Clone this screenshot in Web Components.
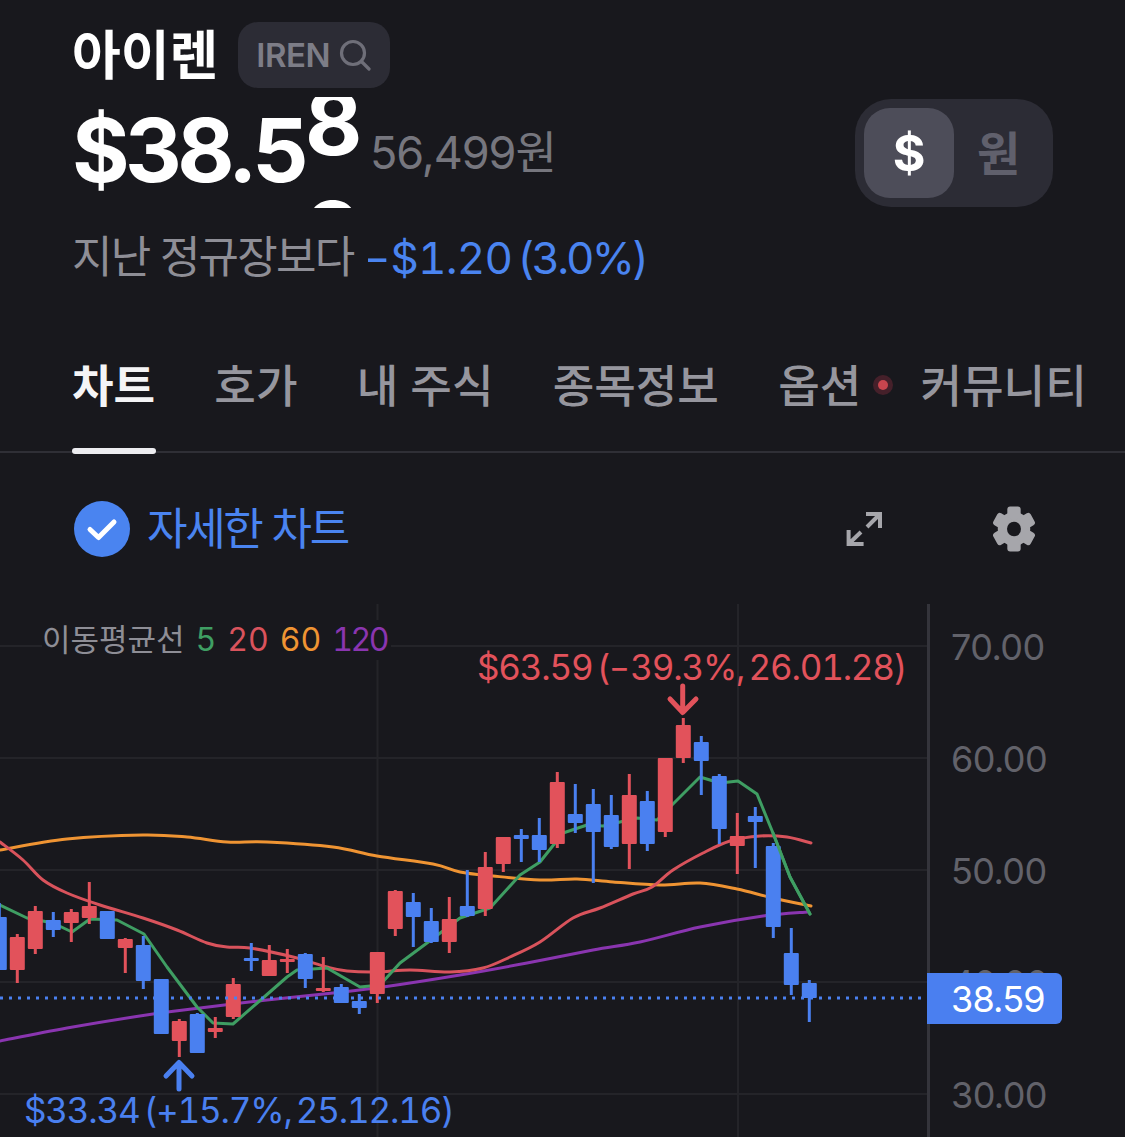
<!doctype html>
<html lang="ko">
<head>
<meta charset="utf-8">
<title>아이렌</title>
<style>
  html, body { margin: 0; background: #18181d; }
  body {
    width: 1125px; height: 1137px; overflow: hidden;
    font-family: Inter, "Noto Sans CJK KR", sans-serif;
    color: #fff;
  }
</style>
</head>
<body>
<stock-header name="아이렌" ticker="IREN" price="$38.5" krw="56,499원" label="지난 정규장보다" amount="$1.20" percent="(3.0%)"></stock-header>
<stock-tabs>
  <stock-tab active>차트</stock-tab>
  <stock-tab>호가</stock-tab>
  <stock-tab>내 주식</stock-tab>
  <stock-tab>종목정보</stock-tab>
  <stock-tab dot>옵션</stock-tab>
  <stock-tab>커뮤니티</stock-tab>
</stock-tabs>
<chart-toolbar>자세한 차트</chart-toolbar>
<candle-chart></candle-chart>

<script>
// unit-toggle: $ / 원 pill on the price row
class UnitToggle extends HTMLElement {
  constructor() {
    super();
    this.attachShadow({ mode: "open" }).innerHTML = `
      <style>
        :host { display: flex; width: 198px; height: 108px; box-sizing: border-box; padding: 9px; background: #2c2c35; border-radius: 36px; margin-top: 2px; }
        span { display: flex; align-items: center; justify-content: center; width: 90px; height: 90px; border-radius: 26px; font-weight: 700; color: #60606c; }
        .on { background: #4d4d59; color: #fff; font-size: 50px; }
        .off { width: 89px; font-size: 47px; padding-bottom: 6px; box-sizing: border-box; }
      </style>
      <span class="on">$</span><span class="off">원</span>`;
  }
}
customElements.define("unit-toggle", UnitToggle);

class StockHeader extends HTMLElement {
  constructor() {
    super();
    this.attachShadow({ mode: "open" });
  }
  connectedCallback() {
    const a = (n) => this.getAttribute(n) || "";
    this.shadowRoot.innerHTML = `
      <style>
        :host { display: block; box-sizing: border-box; height: 345px; padding: 22px 72px 0; }
        .name { display: flex; align-items: center; gap: 20px; height: 66px; }
        h1 { margin: 2px 0 0; font-size: 53px; font-weight: 700; line-height: 66px; }
        .chip { display: flex; align-items: center; gap: 9px; box-sizing: border-box; width: 152px; height: 66px; padding-left: 18px; border-radius: 20px; background: #2c2c35; color: #7d7d87; font-size: 33px; font-weight: 600; letter-spacing: -0.5px; }
        .chip svg { display: block; }
        .row { display: flex; justify-content: space-between; height: 111px; margin-top: 9px; }
        .price { display: flex; align-items: flex-start; }
        .big { font-size: 88px; font-weight: 700; line-height: 110px; letter-spacing: -4.6px; margin-top: -2px; }
        .roller { width: 54px; height: 111px; margin-left: 1px; overflow: hidden; font-size: 88px; font-weight: 700; line-height: 110px; }
        .roller div { transform: translateY(-29px); }
        .krw { margin: 29px 0 0 11px; font-size: 45px; line-height: 54px; color: #76767e; letter-spacing: -1px; }
        .change { display: flex; margin-top: 19px; font-size: 44px; line-height: 62px; color: #8e8e96; white-space: nowrap; }
        .label { letter-spacing: -1.8px; margin: -1px 11px 0 0; }
        .delta { display: flex; color: #4a84f0; }
        .minus { transform-origin: left; transform: scaleX(1.3); margin-right: 6px; }
        .amount { font-feature-settings: "tnum"; letter-spacing: -0.8px; margin-right: 5px; }
        .percent { font-feature-settings: "tnum"; letter-spacing: -2.9px; }
      </style>
      <div class="name">
        <h1>${a("name")}</h1>
        <div class="chip">${a("ticker")}
          <svg width="32" height="32" viewBox="0 0 32 32" fill="none" stroke="#6f6f79" stroke-width="3.2" stroke-linecap="round"><circle cx="14" cy="14" r="11.5"/><path d="M23 23l7 7"/></svg>
        </div>
      </div>
      <div class="row">
        <div class="price">
          <span class="big">${a("price")}</span>
          <div class="roller"><div>8<br>9</div></div>
          <span class="krw">${a("krw")}</span>
        </div>
        <unit-toggle></unit-toggle>
      </div>
      <div class="change"><span class="label">${a("label")}</span><div class="delta"><span class="minus">-</span><span class="amount">${a("amount")}</span><span class="percent">${a("percent")}</span></div></div>`;
  }
}
customElements.define("stock-header", StockHeader);

class StockTabs extends HTMLElement {
  constructor() {
    super();
    this.attachShadow({ mode: "open" }).innerHTML = `
      <style>
        :host { display: flex; gap: 59.2px; box-sizing: border-box; height: 108px; padding-left: 72px; border-bottom: 2px solid #2f2f36; white-space: nowrap; }
      </style>
      <slot></slot>`;
  }
}
customElements.define("stock-tabs", StockTabs);

class StockTab extends HTMLElement {
  constructor() {
    super();
    this.attachShadow({ mode: "open" }).innerHTML = `
      <style>
        :host { display: block; position: relative; font-size: 45.2px; font-weight: 500; line-height: 84px; color: #96969e; }
        :host([active]) { font-weight: 700; color: #f4f4f6; }
        :host([active])::after { content: ""; position: absolute; left: 0; right: -1px; top: 103px; height: 6px; border-radius: 3px; background: #ececf0; }
        :host([dot])::before { content: ""; position: absolute; right: -27px; top: 35px; width: 10px; height: 10px; border-radius: 50%; background: #c8454e; box-shadow: 0 0 0 5px #45202a; }
      </style>
      <slot></slot>`;
  }
}
customElements.define("stock-tab", StockTab);

class ChartToolbar extends HTMLElement {
  constructor() {
    super();
    this.attachShadow({ mode: "open" }).innerHTML = `
      <style>
        :host { display: flex; align-items: center; box-sizing: border-box; height: 151px; padding: 0 0 0 74px; }
        .toolbar-check { display: block; margin-right: 17px; }
        .label { font-size: 44px; line-height: 60px; color: #4a84f0; letter-spacing: -2.3px; flex: 1; }
        svg.expand { display: block; margin-right: 110px; }
        svg.gear { display: block; margin-right: 90px; }
      </style>
      <svg class="toolbar-check" width="56" height="56" viewBox="0 0 56 56"><circle cx="28" cy="28" r="28" fill="#4a84f0"/><path d="M16 28.5l8.5 8L40 21" fill="none" stroke="#fff" stroke-width="5" stroke-linecap="round" stroke-linejoin="round"/></svg>
      <span class="label"><slot></slot></span>
      <svg class="expand" width="38" height="38" viewBox="0 0 38 38" fill="none" stroke="#a6a6ab" stroke-width="4"><path d="M21 4h14v14M35 4L22 17M3.6 20v14h15M3.6 34L16 22"/></svg>
      <svg class="gear" width="42" height="46" viewBox="-22 -23 44 46" preserveAspectRatio="none">
        <g fill="#a6a6ab">
          <circle r="17"/>
          <rect x="-7" y="-22.5" width="14" height="45" rx="3"/>
          <rect x="-7" y="-22.5" width="14" height="45" rx="3" transform="rotate(60)"/>
          <rect x="-7" y="-22.5" width="14" height="45" rx="3" transform="rotate(120)"/>
        </g>
        <circle r="7.3" fill="#18181d"/>
      </svg>`;
  }
}
customElements.define("chart-toolbar", ChartToolbar);

// candle-chart: all numbers are y pixels in page coords (svg viewBox starts at 604)
// [color, wickTop, bodyTop, bodyBottom, wickBottom]; candle i sits at x = -0.7 + 18 * i
const CANDLES = [
  ["b",903,917,970,970],["r",934,937,970,983],["r",906,911,949,954],["b",912,920,930,937],
  ["r",909,912,923,942],["r",882,906,918,924],["b",911,911,939,939],["r",938,939,948,973],
  ["b",936,945,981,989],["b",979,979,1034,1034],["r",1019,1021,1041,1057],["b",1013,1014,1053,1053],
  ["r",1017,1028,1032,1038],["r",978,984,1017,1019],["b",943,958,961,971],["r",945,960,976,976],
  ["r",949,959,962,973],["b",953,954,979,988],["r",957,988,991,992],["b",984,987,1003,1003],
  ["b",994,1001,1008,1014],["r",952,952,994,1003],["r",890,891,929,936],["b",893,902,917,947],
  ["b",908,921,942,943],["r",897,919,942,953],["b",870,906,916,917],["r",852,867,909,916],
  ["r",837,837,864,872],["b",829,835,839,862],["b",818,835,850,862],["r",772,782,844,848],
  ["b",784,814,823,833],["b",789,804,832,883],["b",795,815,847,849],["r",774,795,844,869],
  ["b",791,801,844,851],["r",758,758,832,837],["r",718,725,758,763],["b",736,742,761,795],
  ["b",774,776,829,844],["r",813,836,846,874],["b",807,816,822,868],["b",843,846,927,938],
  ["b",928,953,985,995],["b",980,983,998,1022],
];
const GREEN = "#3f9e63", ROSE = "#d9535c", ORANGE = "#ef9433", PURPLE = "#8a35b0";
const MA = [
  [PURPLE, [[0,1041],[67,1028],[153,1014],[200,1008],[267,1000],[333,993],[383,987],[460,975],[527,963],[593,950],[640,942],[700,927],[763,916],[808,912]]],
  [ORANGE, [[0,850],[67,839],[143,835],[187,837],[227,842],[267,842],[333,847],[377,856],[433,864],[460,872],[493,876],[540,880],[577,879],[613,882],[660,885],[700,883],[737,889],[773,898],[811,906]]],
  [ROSE, [[0,842],[23,860],[43,880],[67,893],[100,905],[143,918],[177,930],[207,943],[227,947],[250,948],[293,957],[327,967],[347,971],[377,972],[410,970],[450,972],[483,968],[510,957],[540,942],[573,918],[600,908],[633,894],[652,887],[673,870],[703,853],[730,841],[760,836],[787,837],[811,843]]],
];
// the 5 line has visible corners in the reference, so it stays a polyline
const MA5 = [[0,905],[27,918],[53,923],[72,932],[90,919],[117,920],[144,934],[167,967],[197,1007],[213,1023],[233,1024],[263,998],[287,977],[297,970],[327,968],[360,987],[380,985],[400,963],[427,943],[460,918],[490,908],[520,875],[540,862],[563,833],[587,825],[603,826],[637,818],[657,820],[677,800],[700,777],[720,783],[738,781],[757,794],[773,833],[790,877],[810,914]];
const RED = "#e2525b", BLUE = "#4a80f0";

// catmull-rom through the points, so the averages don't look like polylines
function smooth(pts) {
  let d = `M${pts[0][0]} ${pts[0][1]}`;
  for (let i = 0; i < pts.length - 1; i++) {
    const p0 = pts[i - 1] || pts[i], p1 = pts[i], p2 = pts[i + 1], p3 = pts[i + 2] || p2;
    d += `C${p1[0] + (p2[0] - p0[0]) / 6} ${p1[1] + (p2[1] - p0[1]) / 6} ${p2[0] - (p3[0] - p1[0]) / 6} ${p2[1] - (p3[1] - p1[1]) / 6} ${p2[0]} ${p2[1]}`;
  }
  return d;
}

class CandleChart extends HTMLElement {
  constructor() {
    super();
    this.attachShadow({ mode: "open" });
  }
  connectedCallback() {
    const grid = [646, 758, 870, 982, 1094]
      .map((y) => `<path d="M0 ${y}H927" stroke="#242429" stroke-width="2"/>`).join("");
    const candles = CANDLES.map(([c, wt, bt, bb, wb], i) => {
      const x = -0.7 + 18 * i, col = c === "r" ? RED : BLUE;
      return `<path d="M${x} ${wt}V${wb}" stroke="${col}" stroke-width="3"/>` +
        `<rect x="${x - 7.5}" y="${bt}" width="15" height="${Math.max(bb - bt, 3)}" rx="1" fill="${col}"/>`;
    });
    const line = (col, pts) =>
      `<path d="${smooth(pts)}" fill="none" stroke="${col}" stroke-width="3" stroke-linecap="round"/>`;
    const poly = (col, pts) =>
      `<polyline points="${pts.map((p) => p.join(",")).join(" ")}" fill="none" stroke="${col}" stroke-width="3" stroke-linejoin="round" stroke-linecap="round"/>`;
    const lines = MA.map(([c, p]) => line(c, p));
    // moving averages run under the candles, except the tail of the 5 line
    this.shadowRoot.innerHTML = `
      <style>
        :host { display: block; position: relative; height: 533px; overflow: hidden; }
        svg { display: block; }
        .legend { position: absolute; left: 42px; top: 16px; display: flex; gap: 11px; padding-right: 4px; background: #18181d; font-size: 31px; line-height: 40px; color: #8e8e96; font-feature-settings: "tnum"; }
        .legend b { font-weight: 400; font-size: 32px; }
        .note { position: absolute; font-size: 35px; line-height: 44px; white-space: nowrap; letter-spacing: -1.2px; word-spacing: -4px; font-feature-settings: "tnum"; }
        .note .minus { display: inline-block; font-feature-settings: normal; transform-origin: left; transform: scaleX(1.3); margin-right: 5px; letter-spacing: 0; }
        .axis { position: absolute; left: 951px; font-size: 36px; line-height: 44px; color: #62626a; letter-spacing: -0.6px; }
        .last { position: absolute; left: 927px; top: 369px; width: 135px; height: 51px; box-sizing: border-box; padding-left: 24px; border-radius: 0 6px 6px 0; background: #4a7ff0; color: #fff; font-size: 36px; line-height: 52px; letter-spacing: -0.8px; }
      </style>
      <svg width="1125" height="533" viewBox="0 604 1125 533">
        ${grid}
        <path d="M377.5 604V1137M738 604V1137" stroke="#242429" stroke-width="2"/>
        <path d="M928.5 604V1137" stroke="#34343b" stroke-width="3"/>
        ${lines.join("")}
        ${poly(GREEN, MA5)}
        ${candles.join("")}
        ${poly(GREEN, MA5.slice(-3))}
        <path d="M0 998H923" stroke="${BLUE}" stroke-width="3" stroke-dasharray="3 6"/>
        <path d="M682.7 686V712M670 699l12.7 13.5L696 699" fill="none" stroke="${RED}" stroke-width="5" stroke-linecap="round" stroke-linejoin="round"/>
        <path d="M179 1089V1063M166 1076l13-13.5L192 1076" fill="none" stroke="${BLUE}" stroke-width="5" stroke-linecap="round" stroke-linejoin="round"/>
      </svg>
      <div class="legend"><span>이동평균선</span><b style="color:#3f9e63">5</b><b style="color:#d9535c">20</b><b style="color:#ef9433">60</b><b style="color:#8a35b0;letter-spacing:-2.5px">120</b></div>
      <div class="note" style="left:477px;top:41px;color:${RED}">$63.59 (<span class="minus">-</span>39.3%, 26.01.28)</div>
      <div class="note" style="left:24px;top:484px;color:${BLUE}">$33.34 (+15.7%, 25.12.16)</div>
      <div class="axis" style="top:21px">70.00</div>
      <div class="axis" style="top:133px">60.00</div>
      <div class="axis" style="top:245px">50.00</div>
      <div class="axis" style="top:357px">40.00</div>
      <div class="axis" style="top:469px">30.00</div>
      <div class="last">38.59</div>`;
  }
}
customElements.define("candle-chart", CandleChart);
</script>
</body>
</html>
